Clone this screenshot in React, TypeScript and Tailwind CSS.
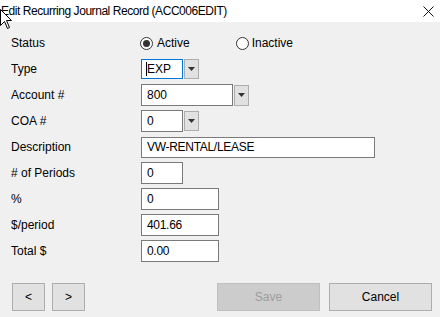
const FIELDS = [
  { label: 'Description', value: 'VW-RENTAL/LEASE', w: 'w-[234px]', h: 'h-[21px]' },
  { label: '# of Periods', value: '0', w: 'w-[42px]', h: 'h-[22px]' },
  { label: '%', value: '0', w: 'w-[78px]', h: 'h-[22px]' },
  { label: '$/period', value: '401.66', w: 'w-[78px]', h: 'h-[22px]' },
  { label: 'Total $', value: '0.00', w: 'w-[78px]', h: 'h-[22px]' },
]

function Drop({ h }: { h: string }) {
  return (
    <div className={`ml-px w-[15px] ${h} bg-[#e1e1e1] border border-[#adadad] flex items-center justify-center`}>
      <svg width="7" height="4" viewBox="0 0 7 4">
        <path d="M0 0 L7 0 L3.5 4 Z" fill="#333" />
      </svg>
    </div>
  )
}

function Radio({ on }: { on?: boolean }) {
  return (
    <span className="w-[13px] h-[13px] rounded-full border border-[#333] bg-white flex items-center justify-center">
      {on && <span className="w-[7px] h-[7px] rounded-full bg-[#333]" />}
    </span>
  )
}

function Row({ label, children }: { label: string; children: React.ReactNode }) {
  return (
    <div className="flex items-center h-[26px]">
      <div className="w-[141px] pl-[11px]">{label}</div>
      {children}
    </div>
  )
}

export default function App() {
  return (
    <div
      className="relative w-[440px] h-[317px] overflow-hidden bg-[#f0f0f0] text-black text-[12px]"
      style={{ fontFamily: '"Liberation Sans", Arial, sans-serif' }}
    >
      <div className="h-[22px] bg-white flex items-center justify-between pl-px pr-[6px]">
        <span className="text-[12px] tracking-[-0.45px]">Edit Recurring Journal Record (ACC006EDIT)</span>
        <svg width="11" height="11" viewBox="0 0 11 11">
          <path d="M0.5 0.5 L10.5 10.5 M10.5 0.5 L0.5 10.5" stroke="#111" strokeWidth="1" />
        </svg>
      </div>

      <div className="pt-[8px]">
        <Row label="Status">
          <div className="flex items-center -ml-px">
            <Radio on />
            <span className="ml-[4px]">Active</span>
            <span className="ml-[46px]">
              <Radio />
            </span>
            <span className="ml-[3px]">Inactive</span>
          </div>
        </Row>
        <Row label="Type">
          <div className="relative w-[42px] h-[20px] bg-white border border-[#0078d7] flex items-center pl-[5px]">
            <span className="absolute left-[4px] top-[2px] w-px h-[14px] bg-black" />
            EXP
          </div>
          <Drop h="h-[20px]" />
        </Row>
        <Row label="Account #">
          <div className="w-[92px] h-[22px] bg-white border border-[#7a7a7a] flex items-center pl-[5px]">800</div>
          <Drop h="h-[21px]" />
        </Row>
        <Row label="COA #">
          <div className="w-[42px] h-[22px] bg-white border border-[#7a7a7a] flex items-center pl-[5px]">0</div>
          <Drop h="h-[20px]" />
        </Row>
        {FIELDS.map((f) => (
          <Row key={f.label} label={f.label}>
            <div className={`${f.w} ${f.h} bg-white border border-[#7a7a7a] flex items-center pl-[5px] tracking-[-0.3px]`}>{f.value}</div>
          </Row>
        ))}
      </div>

      <div className="mt-[19px] flex items-center pl-[12px] pr-[8px] h-[28px]">
        <button className="w-[33px] h-[28px] bg-[#e1e1e1] border border-[#adadad]">&lt;</button>
        <button className="ml-[7px] w-[33px] h-[28px] bg-[#e1e1e1] border border-[#adadad]">&gt;</button>
        <button className="ml-auto w-[103px] h-[28px] bg-[#cccccc] border border-[#bfbfbf] text-[#9d9d9d]">Save</button>
        <button className="ml-[9px] w-[103px] h-[28px] bg-[#e1e1e1] border border-[#adadad]">Cancel</button>
      </div>

      <svg className="absolute left-0 top-[9px]" width="13" height="21" viewBox="0 0 13 21">
        <path d="M0.5 0.5 L0.5 16.5 L4.5 12.5 L7.5 19.5 L9.5 18.5 L6.5 11.5 L11.5 11.5 Z" fill="#fff" stroke="#000" strokeWidth="1" />
      </svg>
    </div>
  )
}
